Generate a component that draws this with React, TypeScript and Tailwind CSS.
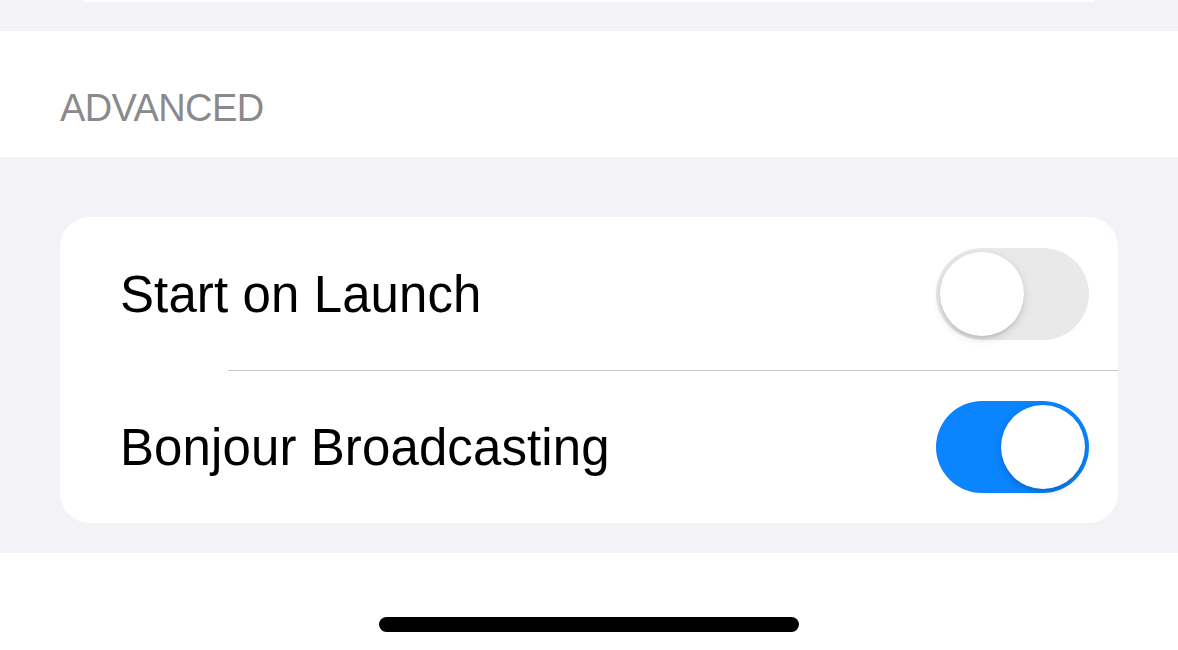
export default function App() {
  const font = { fontFamily: '"Liberation Sans", Arial, sans-serif' };
  return (
    <div className="w-[1178px] h-[650px] bg-white overflow-hidden" style={font}>
      {/* tail of the card above */}
      <div className="h-[31px] bg-[#f2f2f7]">
        <div className="mx-[84px] h-[2px] bg-white" />
      </div>

      <div className="h-[126px] bg-white px-[60px] pt-[53px]">
        <div className="text-[38px] leading-[48px] text-[#8a8a8e] tracking-[-0.6px]">ADVANCED</div>
      </div>

      <div className="bg-[#f2f2f7] pt-[60px] pb-[30px] px-[60px]">
        <div className="bg-white rounded-[30px] overflow-hidden">
          <Row label="Start on Launch" on={false} h="h-[153px]" />
          <div className="ml-[168px] h-px bg-[#c8c8cc]" />
          <Row label="Bonjour Broadcasting" on={true} h="h-[152px]" />
        </div>
      </div>

      <div className="flex justify-center pt-[64px]">
        <div className="w-[420px] h-[15px] rounded-full bg-black" />
      </div>
    </div>
  );
}

function Row({ label, on, h }: { label: string; on: boolean; h: string }) {
  return (
    <div className={h + " flex items-center justify-between pl-[60px] pr-[29px]"}>
      <span className="text-[51px] text-black tracking-[0.1px] pt-[3px]">{label}</span>
      <div
        className={
          on
            ? "w-[153px] h-[92px] rounded-full bg-[#0a84ff] p-[4px] flex justify-end"
            : "w-[153px] h-[92px] rounded-full bg-[#e9e9ea] p-[4px] flex justify-start"
        }
      >
        <div className="w-[84px] h-[84px] rounded-full bg-white shadow-[0_3px_8px_rgba(0,0,0,0.15),0_3px_1px_rgba(0,0,0,0.06)]" />
      </div>
    </div>
  );
}
